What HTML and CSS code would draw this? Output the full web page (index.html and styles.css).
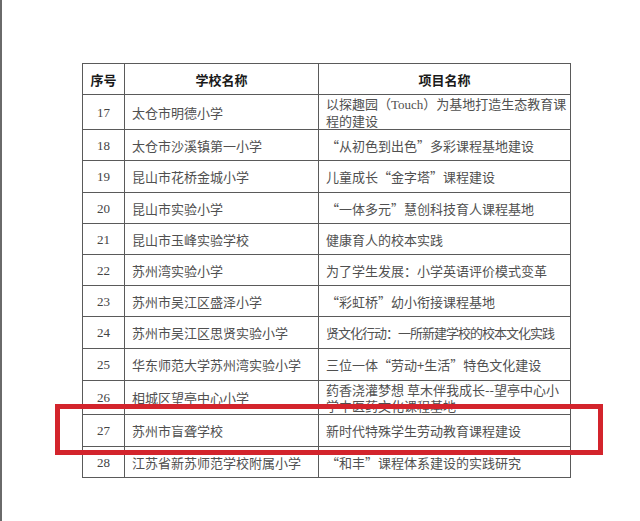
FILE: index.html
```html
<!DOCTYPE html>
<html lang="zh-CN">
<head>
<meta charset="utf-8">
<link rel="stylesheet" href="styles.css">
</head>
<body>
<div class="page">
  <div class="sheet">
    <table class="list">
      <colgroup><col class="c-no"><col class="c-school"><col class="c-proj"></colgroup>
      <thead>
        <tr class="head"><th>序号</th><th>学校名称</th><th>项目名称</th></tr>
      </thead>
      <tbody>
        <tr class="h35"><td class="no">17</td><td>太仓市明德小学</td><td class="two">以探趣园（<span class="lat">Touch</span>）为基地打造生态教育课<br>程的建设</td></tr>
        <tr><td class="no">18</td><td>太仓市沙溪镇第一小学</td><td>“从初色到出色”多彩课程基地建设</td></tr>
        <tr class="h32"><td class="no">19</td><td>昆山市花桥金城小学</td><td>儿童成长“金字塔”课程建设</td></tr>
        <tr><td class="no">20</td><td>昆山市实验小学</td><td>“一体多元”慧创科技育人课程基地</td></tr>
        <tr><td class="no">21</td><td>昆山市玉峰实验学校</td><td>健康育人的校本实践</td></tr>
        <tr><td class="no">22</td><td>苏州湾实验小学</td><td>为了学生发展：小学英语评价模式变革</td></tr>
        <tr><td class="no">23</td><td>苏州市吴江区盛泽小学</td><td>“彩虹桥”幼小衔接课程基地</td></tr>
        <tr class="h32"><td class="no">24</td><td>苏州市吴江区思贤实验小学</td><td class="tight">贤文化行动：一所新建学校的校本文化实践</td></tr>
        <tr class="h32"><td class="no">25</td><td>华东师范大学苏州湾实验小学</td><td>三位一体“劳动+生活”特色文化建设</td></tr>
        <tr class="h34"><td class="no">26</td><td>相城区望亭中心小学</td><td class="two">药香浇灌梦想 草木伴我成长--望亭中心小<br>学中医药文化课程基地</td></tr>
        <tr class="h32"><td class="no">27</td><td>苏州市盲聋学校</td><td>新时代特殊学生劳动教育课程建设</td></tr>
        <tr><td class="no">28</td><td>江苏省新苏师范学校附属小学</td><td>“和丰”课程体系建设的实践研究</td></tr>
      </tbody>
    </table>
    <div class="mark"></div>
  </div>
</div>
</body>
</html>
```

FILE: styles.css
```css
html, body {
  margin: 0;
  padding: 0;
  background: #fff;
}
.page {
  box-sizing: border-box;
  height: 521px;
  border-left: 2px solid #6a6a6a;
  padding-top: 63px;
  overflow: hidden;
}
.sheet {
  position: relative;
  margin-left: 80px;
  width: 489px;
}
.list {
  border-collapse: collapse;
  table-layout: fixed;
  width: 489px;
  font-family: "Noto Sans CJK SC", sans-serif;
  font-size: 13px;
  color: #505050;
}
.c-no { width: 42px; }
.c-school { width: 194px; }
.c-proj { width: 252px; }
.list th, .list td {
  border: 1px solid #5a5a5a;
  padding: 0 0 0 7px;
  white-space: nowrap;
  overflow: hidden;
  vertical-align: middle;
  line-height: 17px;
}
.list th {
  text-align: center;
  padding: 0;
  font-weight: 700;
  color: #1a1a1a;
  font-size: 13px;
}
.list tr { height: 31px; }
.list tr.head { height: 31px; }
.list tr.h32 { height: 32px; }
.list tr.h34 { height: 34px; }
.list tr.h35 { height: 35px; }
.list td.no {
  text-align: center;
  padding: 0;
  font-family: "Liberation Serif", serif;
  font-size: 13px;
  color: #444;
}
.list td.two { line-height: 16px; }
.list td.tight { letter-spacing: -1px; }
.lat { font-family: "Liberation Serif", serif; }
.mark {
  position: absolute;
  left: -27px;
  top: 341px;
  width: 538px;
  height: 41px;
  border: 5px solid #d3242c;
}
```
